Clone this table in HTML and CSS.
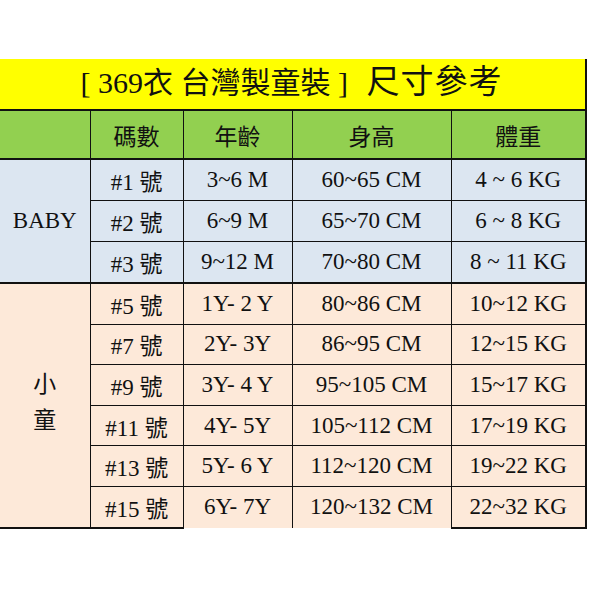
FILE: index.html
```html
<!DOCTYPE html>
<html lang="zh-Hant">
<head>
<meta charset="utf-8">
<title>369衣 尺寸參考</title>
<link rel="stylesheet" href="styles.css">
</head>
<body>
<div class="page">
<table class="size">
  <colgroup>
    <col class="c1"><col class="c2"><col class="c3"><col class="c4"><col class="c5">
  </colgroup>
  <tr class="title-row"><td colspan="5" class="title"><span class="brand">[ 369衣 台灣製童裝 ]</span><span class="ref">  尺寸參考</span></td></tr>
  <tr class="head-row">
    <th class="first"></th><th>碼數</th><th>年齡</th><th>身高</th><th class="last">體重</th>
  </tr>
  <tr class="baby">
    <td rowspan="3" class="group first baby-end">BABY</td>
    <td>#1 號</td><td>3~6 M</td><td>60~65 CM</td><td class="last">4 ~ 6 KG</td>
  </tr>
  <tr class="baby">
    <td>#2 號</td><td>6~9 M</td><td>65~70 CM</td><td class="last">6 ~ 8 KG</td>
  </tr>
  <tr class="baby baby-end">
    <td>#3 號</td><td>9~12 M</td><td>70~80 CM</td><td class="last">8 ~ 11 KG</td>
  </tr>
  <tr class="kid">
    <td rowspan="6" class="group first kid-group bottom">小<br>童</td>
    <td>#5 號</td><td>1Y- 2 Y</td><td>80~86 CM</td><td class="last">10~12 KG</td>
  </tr>
  <tr class="kid">
    <td>#7 號</td><td>2Y- 3Y</td><td>86~95 CM</td><td class="last">12~15 KG</td>
  </tr>
  <tr class="kid">
    <td>#9 號</td><td>3Y- 4 Y</td><td>95~105 CM</td><td class="last">15~17 KG</td>
  </tr>
  <tr class="kid">
    <td>#11 號</td><td>4Y- 5Y</td><td>105~112 CM</td><td class="last">17~19 KG</td>
  </tr>
  <tr class="kid">
    <td>#13 號</td><td>5Y- 6 Y</td><td>112~120 CM</td><td class="last">19~22 KG</td>
  </tr>
  <tr class="kid final">
    <td class="bottom">#15 號</td><td class="open">6Y- 7Y</td><td class="open">120~132 CM</td><td class="last bottom">22~32 KG</td>
  </tr>
</table>
</div>
</body>
</html>
```
FILE: styles.css
```css
body {
  margin: 0;
  background: #ffffff;
  font-family: "Liberation Serif", "Noto Sans CJK TC", serif;
  color: #111111;
}

.page {
  padding-top: 59px;
}

.size {
  border-collapse: collapse;
  table-layout: fixed;
  width: 586px;
}

.c1 { width: 90px; }
.c2 { width: 93px; }
.c3 { width: 109px; }
.c4 { width: 159px; }
.c5 { width: 135px; }

.size td,
.size th {
  padding: 0;
  text-align: center;
  vertical-align: middle;
  font-weight: normal;
  border: 1px solid #111111;
  white-space: pre;
}

.size .first {
  border-left: none;
}

.size .last {
  border-right: 2px solid #111111;
}

.title-row td {
  height: 48px;
  background: #ffff00;
  border-top: none;
  border-left: none;
  border-bottom: 2px solid #111111;
  padding-top: 2px;
  line-height: 40px;
}

.brand {
  font-size: 30px;
}

.ref {
  font-size: 33px;
  letter-spacing: 1px;
}

.size .title {
  border-right: 2px solid #111111;
  padding-right: 2px;
}

.head-row th {
  height: 47px;
  background: #92d050;
  font-size: 23px;
  border-top: 2px solid #111111;
  border-bottom: 2px solid #111111;
}

.baby td {
  height: 40px;
  background: #dce6f1;
  font-size: 23px;
}

.baby-end td,
.size td.baby-end {
  border-bottom: 2px solid #111111;
}

.kid td {
  height: 39.6px;
  background: #fde9d9;
  font-size: 23px;
}

.size td.group {
  font-size: 23px;
}

.size td.kid-group {
  line-height: 36px;
  padding-bottom: 4px;
}

.size td.bottom {
  border-bottom: 2px solid #111111;
}

.size td.open {
  border-bottom: none;
}
```
